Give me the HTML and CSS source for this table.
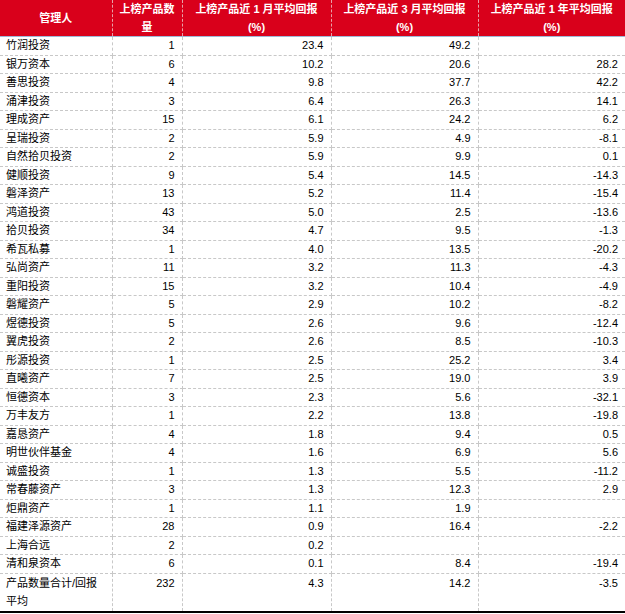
FILE: index.html
```html
<!DOCTYPE html>
<html lang="zh-CN">
<head>
<meta charset="utf-8">
<title>管理人</title>
<link rel="stylesheet" href="styles.css">
</head>
<body>
<table class="tbl">
  <colgroup>
    <col class="c1"><col class="c2"><col class="c3"><col class="c4"><col class="c5">
  </colgroup>
  <thead>
    <tr>
      <th>管理人</th>
      <th>上榜产品数量</th>
      <th>上榜产品近 1 月平均回报<br>(%)</th>
      <th>上榜产品近 3 月平均回报<br>(%)</th>
      <th>上榜产品近 1 年平均回报<br>(%)</th>
    </tr>
  </thead>
  <tbody>
    <tr><td>竹润投资</td><td>1</td><td>23.4</td><td>49.2</td><td></td></tr>
    <tr><td>银万资本</td><td>6</td><td>10.2</td><td>20.6</td><td>28.2</td></tr>
    <tr><td>善思投资</td><td>4</td><td>9.8</td><td>37.7</td><td>42.2</td></tr>
    <tr><td>涌津投资</td><td>3</td><td>6.4</td><td>26.3</td><td>14.1</td></tr>
    <tr><td>理成资产</td><td>15</td><td>6.1</td><td>24.2</td><td>6.2</td></tr>
    <tr><td>呈瑞投资</td><td>2</td><td>5.9</td><td>4.9</td><td>-8.1</td></tr>
    <tr><td>自然拾贝投资</td><td>2</td><td>5.9</td><td>9.9</td><td>0.1</td></tr>
    <tr><td>健顺投资</td><td>9</td><td>5.4</td><td>14.5</td><td>-14.3</td></tr>
    <tr><td>磐泽资产</td><td>13</td><td>5.2</td><td>11.4</td><td>-15.4</td></tr>
    <tr><td>鸿道投资</td><td>43</td><td>5.0</td><td>2.5</td><td>-13.6</td></tr>
    <tr><td>拾贝投资</td><td>34</td><td>4.7</td><td>9.5</td><td>-1.3</td></tr>
    <tr><td>希瓦私募</td><td>1</td><td>4.0</td><td>13.5</td><td>-20.2</td></tr>
    <tr><td>弘尚资产</td><td>11</td><td>3.2</td><td>11.3</td><td>-4.3</td></tr>
    <tr><td>重阳投资</td><td>15</td><td>3.2</td><td>10.4</td><td>-4.9</td></tr>
    <tr><td>磐耀资产</td><td>5</td><td>2.9</td><td>10.2</td><td>-8.2</td></tr>
    <tr><td>煜德投资</td><td>5</td><td>2.6</td><td>9.6</td><td>-12.4</td></tr>
    <tr><td>翼虎投资</td><td>2</td><td>2.6</td><td>8.5</td><td>-10.3</td></tr>
    <tr><td>彤源投资</td><td>1</td><td>2.5</td><td>25.2</td><td>3.4</td></tr>
    <tr><td>直曦资产</td><td>7</td><td>2.5</td><td>19.0</td><td>3.9</td></tr>
    <tr><td>恒德资本</td><td>3</td><td>2.3</td><td>5.6</td><td>-32.1</td></tr>
    <tr><td>万丰友方</td><td>1</td><td>2.2</td><td>13.8</td><td>-19.8</td></tr>
    <tr><td>嘉恳资产</td><td>4</td><td>1.8</td><td>9.4</td><td>0.5</td></tr>
    <tr><td>明世伙伴基金</td><td>4</td><td>1.6</td><td>6.9</td><td>5.6</td></tr>
    <tr><td>诚盛投资</td><td>1</td><td>1.3</td><td>5.5</td><td>-11.2</td></tr>
    <tr><td>常春藤资产</td><td>3</td><td>1.3</td><td>12.3</td><td>2.9</td></tr>
    <tr><td>炬鼎资产</td><td>1</td><td>1.1</td><td>1.9</td><td></td></tr>
    <tr><td>福建泽源资产</td><td>28</td><td>0.9</td><td>16.4</td><td>-2.2</td></tr>
    <tr><td>上海合远</td><td>2</td><td>0.2</td><td></td><td></td></tr>
    <tr><td>清和泉资本</td><td>6</td><td>0.1</td><td>8.4</td><td>-19.4</td></tr>
    <tr class="total"><td>产品数量合计/回报平均</td><td>232</td><td>4.3</td><td>14.2</td><td>-3.5</td></tr>
  </tbody>
</table>
</body>
</html>
```
FILE: styles.css
```css
html, body {
  margin: 0;
  padding: 0;
  background: #ffffff;
}
.tbl {
  border-collapse: collapse;
  table-layout: fixed;
  width: 625px;
  font-family: "Liberation Sans", "Noto Sans CJK SC", sans-serif;
  font-size: 11px;
  color: #000;
}
.c1 { width: 112px; }
.c2 { width: 70px; }
.c3 { width: 149px; }
.c4 { width: 147px; }
.c5 { width: 147px; }
.tbl th {
  background: #d9001b;
  color: #fff;
  font-weight: bold;
  text-align: center;
  vertical-align: middle;
  line-height: 18px;
  height: 36px;
  padding: 0 7px;
  border-left: 1px dashed #e8a0a8;
  border-bottom: 1px solid #9fb8d6;
}
.tbl th:first-child { border-left: none; }
.tbl td {
  height: 17.5px;
  line-height: 17.5px;
  padding: 0 7px;
  text-align: right;
  vertical-align: top;
  border: 1px dashed #c8c8c8;
  border-top: none;
  white-space: nowrap;
  overflow: hidden;
}
.tbl td:first-child {
  text-align: left;
  padding-left: 6px;
  border-left: none;
}
.tbl td:last-child { border-right: none; }
.tbl .total td {
  white-space: normal;
  line-height: 18px;
  height: 37px;
  border-bottom: 2px solid #000;
}
```
